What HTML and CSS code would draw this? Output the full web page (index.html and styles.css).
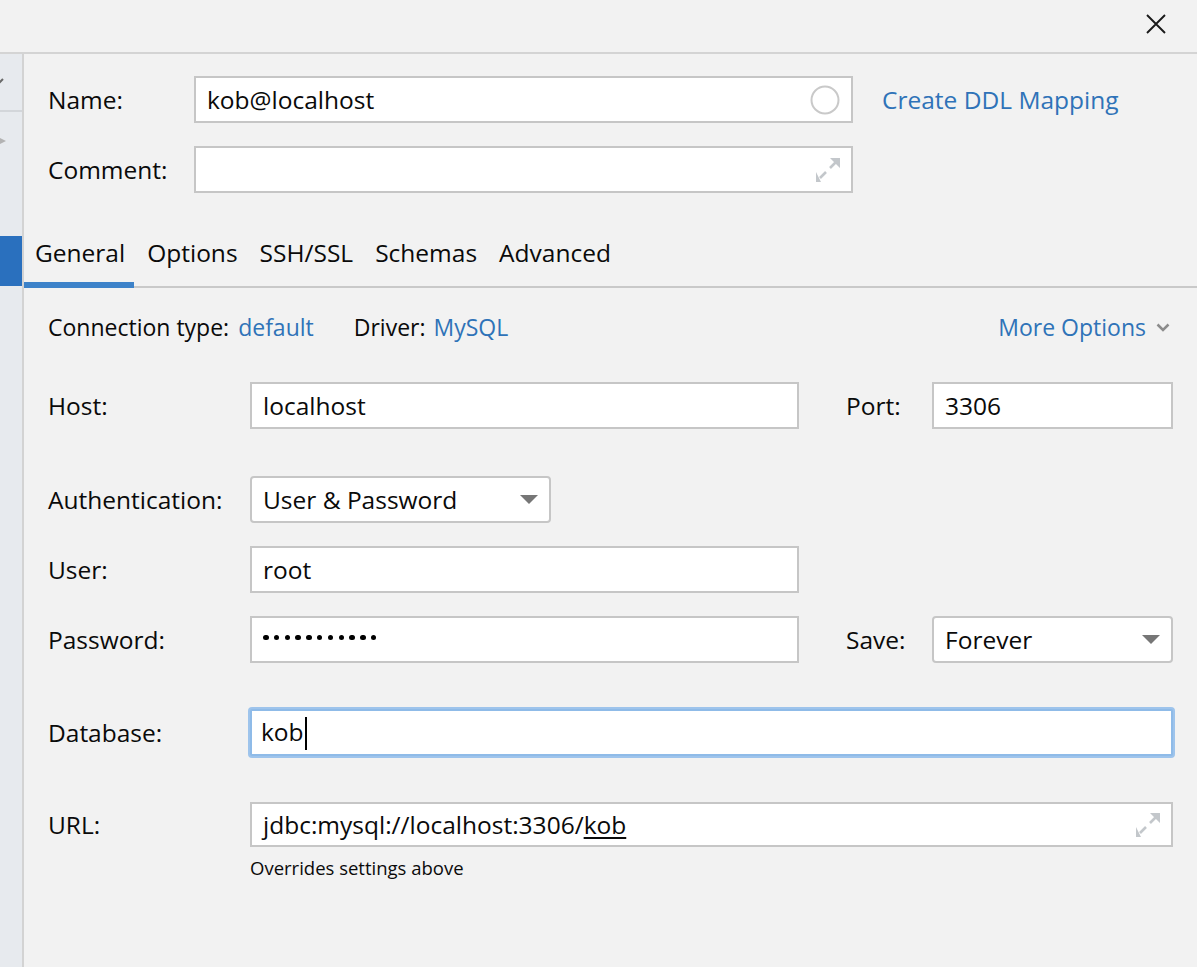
FILE: index.html
```html
<!DOCTYPE html>
<html lang="en">
<head>
<meta charset="utf-8">
<title>Data Source</title>
<link rel="stylesheet" href="styles.css">
</head>
<body>
<div class="window">
  <div class="titlebar">
    <svg class="close" width="20" height="20" viewBox="0 0 20 20"><path d="M1 1L19 19M19 1L1 19" stroke="#1a1a1a" stroke-width="1.9" fill="none"/></svg>
  </div>
  <div class="main">
    <aside class="sidebar">
      <div class="sb-group"><svg class="sb-chevron" width="12" height="7" viewBox="0 0 12 7"><path d="M1 1L6 6L11 1" fill="none" stroke="#6a6a6a" stroke-width="2"/></svg></div>
      <div class="sb-item"><svg class="sb-arrow" width="12" height="12" viewBox="0 0 12 12"><path d="M0 0L12 6L0 12Z" fill="#b3b3b3"/></svg></div>
      <div class="sb-selected"></div>
    </aside>
    <section class="content">
      <div class="header">
        <div class="hrow">
          <span class="hlabel">Name:</span>
          <div class="box hbox"><span class="val">kob@localhost</span><svg width="30" height="30" viewBox="0 0 30 30"><circle cx="15" cy="15" r="13.5" fill="none" stroke="#c9c9c9" stroke-width="2"/></svg></div>
          <a class="link create">Create DDL Mapping</a>
        </div>
        <div class="hrow">
          <span class="hlabel">Comment:</span>
          <div class="box hbox"><span class="val"></span><svg class="expand" width="24" height="24" viewBox="0 0 24 24"><path d="M14 0H24V10Z M5 24H0V14Z" fill="#c3c7cb"/><path d="M20 4L14 10M4 20L10 14" stroke="#c3c7cb" stroke-width="2.6"/></svg></div>
        </div>
      </div>
      <nav class="tabs">
        <span class="tab active">General</span>
        <span class="tab">Options</span>
        <span class="tab">SSH/SSL</span>
        <span class="tab">Schemas</span>
        <span class="tab">Advanced</span>
      </nav>
      <div class="general">
        <div class="conn">
          <span>Connection type:</span><a class="link ctype">default</a>
          <span class="driver">Driver:</span><a class="link dname">MySQL</a>
          <a class="link more">More Options <svg width="14" height="9" viewBox="0 0 14 9"><path d="M1.5 1.5L7 7L12.5 1.5" fill="none" stroke="#8c8c8c" stroke-width="2.5"/></svg></a>
        </div>
        <div class="row r-host">
          <span class="lbl">Host:</span>
          <div class="box f-main"><span class="val">localhost</span></div>
          <span class="slbl">Port:</span>
          <div class="box f-side"><span class="val">3306</span></div>
        </div>
        <div class="row r-auth">
          <span class="lbl">Authentication:</span>
          <div class="box select f-auth"><span class="val">User &amp; Password</span><svg width="18" height="9" viewBox="0 0 18 9"><path d="M0 0H18L9 9Z" fill="#767676"/></svg></div>
        </div>
        <div class="row">
          <span class="lbl">User:</span>
          <div class="box f-main"><span class="val">root</span></div>
        </div>
        <div class="row">
          <span class="lbl">Password:</span>
          <div class="box f-main"><span class="dots" aria-label="password"><i></i><i></i><i></i><i></i><i></i><i></i><i></i><i></i><i></i><i></i><i></i></span></div>
          <span class="slbl">Save:</span>
          <div class="box select f-side"><span class="val">Forever</span><svg width="18" height="9" viewBox="0 0 18 9"><path d="M0 0H18L9 9Z" fill="#767676"/></svg></div>
        </div>
        <div class="row r-db">
          <span class="lbl">Database:</span>
          <div class="box f-db"><span class="val">kob<span class="caret"></span></span></div>
        </div>
        <div class="row r-url">
          <span class="lbl">URL:</span>
          <div class="box f-url"><span class="val">jdbc:mysql://localhost:3306/<u>kob</u></span><svg class="expand" width="24" height="24" viewBox="0 0 24 24"><path d="M14 0H24V10Z M5 24H0V14Z" fill="#c3c7cb"/><path d="M20 4L14 10M4 20L10 14" stroke="#c3c7cb" stroke-width="2.6"/></svg></div>
        </div>
        <div class="hint">Overrides settings above</div>
      </div>
    </section>
  </div>
</div>
</body>
</html>
```
FILE: styles.css
```css
* { box-sizing: border-box; }
html, body { margin: 0; height: 100%; }
body {
  background: #f2f2f2;
  font-family: "Open Sans", "Noto Sans", sans-serif;
  font-size: 24.5px;
  color: #0a0a0a;
  overflow: hidden;
}
.window { height: 100vh; display: flex; flex-direction: column; }
.titlebar {
  height: 54px;
  flex: none;
  border-bottom: 2px solid #d4d4d4;
  display: flex;
  justify-content: flex-end;
  align-items: flex-start;
  padding: 14px 31px 0 0;
}
.close { display: block; }
.main { flex: 1; display: flex; min-height: 0; }
.sidebar {
  width: 24px;
  flex: none;
  background: #e7eaee;
  border-right: 2px solid #d3d3d3;
  overflow: hidden;
}
.sb-group { height: 58px; border-bottom: 2px solid #d3d6da; padding-top: 24px; }
.sb-chevron { display: block; margin-left: -8px; }
.sb-item { height: 60px; padding-top: 23px; }
.sb-arrow { display: block; margin-left: -6px; }
.sb-selected { height: 50px; background: #2a70be; margin-top: 64px; }

.content { flex: 1; min-width: 0; display: flex; flex-direction: column; }
.header { padding: 22px 0 0 24px; display: flex; flex-direction: column; gap: 23px; }
.hrow { display: flex; align-items: center; }
.hlabel { width: 146px; flex: none; }
.box {
  background: #fff;
  border: 2px solid #c6c6c6;
  display: flex;
  align-items: center;
  padding: 0 11px;
  flex: none;
}
.box .val { flex: 1; white-space: pre; }
.hbox { width: 659px; height: 47px; }
.link { color: #2f73b8; text-decoration: none; }
.create { margin-left: 29px; }

.tabs { margin-top: 43px; display: flex; border-bottom: 2px solid #c9c9c9; }
.tab { position: relative; height: 50px; line-height: 34px; padding: 0 11px; }
.tab.active { padding-right: 9px; }
.tab.active::after {
  content: "";
  position: absolute;
  left: 0; right: 0; bottom: -2px;
  height: 6px;
  background: #3d82c9;
}
.tab.active + .tab { padding-left: 13px; }

.general { padding: 22px 24px 0 24px; }
.conn { display: flex; align-items: center; height: 34px; font-size: 23px; }
.ctype { margin-left: 9px; }
.driver { margin-left: 40px; }
.dname { margin-left: 8px; }
.more { margin-left: auto; margin-right: 3px; display: flex; align-items: center; gap: 10px; }

.row { display: flex; align-items: center; margin-top: 23px; }
.r-host { margin-top: 38px; }
.r-auth { margin-top: 47px; }
.r-db, .r-url { margin-top: 46px; }
.lbl { width: 202px; flex: none; }
.slbl { width: 86px; margin-left: 47px; flex: none; }
.f-main { width: 549px; height: 47px; }
.f-side { width: 241px; height: 47px; }
.f-auth { width: 301px; height: 47px; }
.select { border-radius: 4px; padding-right: 11px; }
.f-db {
  width: 923px;
  height: 47px;
  padding-left: 9px;
  border-color: #8fbbe8;
  box-shadow: 0 0 0 2px #9ec4ec;
  border-radius: 2px;
}
.f-url { width: 923px; height: 45px; }
.dots { display: flex; gap: 5.3px; margin-top: -4px; }
.dots i { display: block; width: 5.5px; height: 5.5px; border-radius: 50%; background: #000; }
.caret {
  display: inline-block;
  width: 2px;
  height: 33px;
  background: #000;
  vertical-align: middle;
  margin-left: 1px;
}
u { text-decoration-thickness: 2px; text-underline-offset: 3px; }
.hint { font-size: 18.5px; margin: 8px 0 0 202px; }
```
